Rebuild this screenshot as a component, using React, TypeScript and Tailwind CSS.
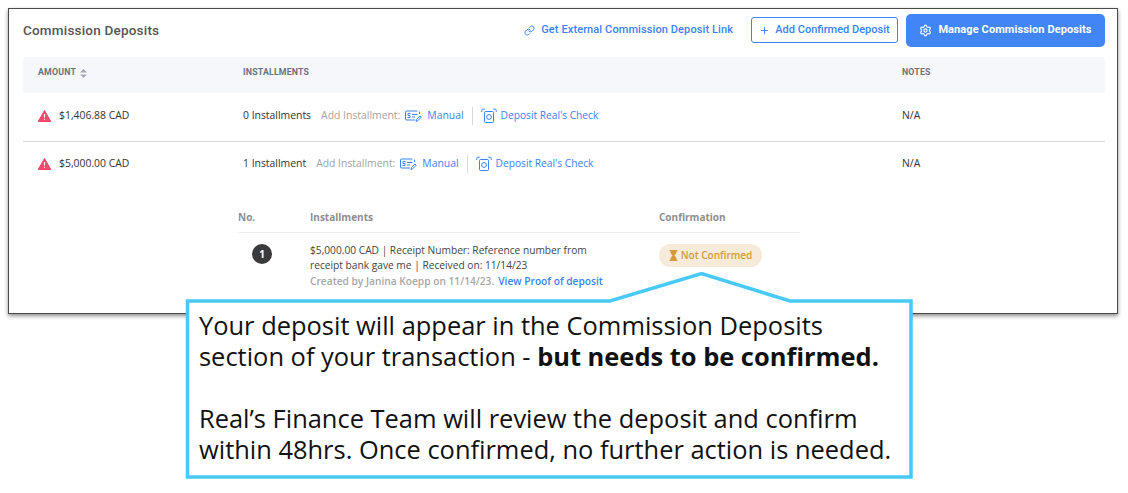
import { Link, Plus, Settings } from "lucide-react";

const din = "font-['Roboto',sans-serif]";
const open = "font-['Open_Sans',sans-serif]";

function ManualIcon() {
  return (
    <svg width="17" height="14" viewBox="0 0 17 14" fill="none" stroke="#3b82f6" strokeWidth="1">
      <path d="M12.5 2H1.5a1 1 0 0 0-1 1v7a1 1 0 0 0 1 1H10" />
      <path d="M14.5 2.5v2.5" />
      <path d="M5.5 4.5H3v2h2v2H2.5" />
      <path d="M7 5.5H12.5M7 8H10" />
      <path d="M11 12.5l.5-2L15 7l1.2 1.2-3.5 3.6z" />
    </svg>
  );
}

function CheckIcon() {
  return (
    <svg width="16" height="16" viewBox="0 0 16 16" fill="none" stroke="#3b82f6" strokeWidth="1">
      <path d="M.8 4V2.2a1 1 0 0 1 1-1h2M15.2 4V2.2a1 1 0 0 0-1-1h-2" />
      <rect x="3.5" y="3.5" width="9" height="11" rx="1" />
      <circle cx="8" cy="9" r="2.4" />
    </svg>
  );
}

function WarningIcon() {
  return (
    <svg width="13" height="12" viewBox="0 0 13 12">
      <path d="M6.5.5L12.8 11.5H.2Z" fill="#f0486c" stroke="#f0486c" strokeLinejoin="round" />
      <path d="M6.5 4v3.6M6.5 8.8v1" stroke="#fff" strokeWidth="1.2" />
    </svg>
  );
}

function SortIcon() {
  return (
    <svg width="7" height="9" viewBox="0 0 7 9" fill="#a3a8b4">
      <path d="M3.5 0L7 3.5H0Z" />
      <path d="M3.5 9L0 5.5H7Z" />
    </svg>
  );
}

function HourglassIcon() {
  return (
    <svg width="9" height="11" viewBox="0 0 9 11" fill="#d59a3c">
      <path d="M.5 0h8v1h-.8c0 2-1 3.400-2.200 4.500 1.200 1.100 2.200 2.500 2.200 4.500h.8v1h-8v-1h.8c0-2 1-3.400 2.200-4.500C2.300 4.400 1.300 3 1.300 1H.5Z" />
    </svg>
  );
}

function AddInstallment() {
  return (
    <div className={`flex items-center text-[10.4px] ${open}`}>
      <span className="text-[#a3a3a3]">Add Installment:</span>
      <span className="ml-[5px] flex items-center gap-[5px] text-[#3b82f6]">
        <ManualIcon />
        Manual
      </span>
      <span className="ml-2 mr-2 h-[18px] w-px bg-[#d9d9d9]" />
      <span className="flex items-center gap-1 text-[10.2px] text-[#3b82f6]">
        <CheckIcon />
        Deposit Real's Check
      </span>
    </div>
  );
}

function DepositRow({ amount, count, border }: { amount: string; count: string; border?: boolean }) {
  return (
    <div className={`flex items-center text-[10.4px] text-[#333] ${open} ${border ? "h-[49px] border-b border-[#d9d9dc] pb-[2px]" : "h-[44px]"}`}>
      <div className="flex w-[220px] items-center pl-[15px]">
        <WarningIcon />
        <span className="ml-2">{amount}</span>
      </div>
      <div className="flex w-[659px] items-center">
        <span className="mr-[10px]">{count}</span>
        <AddInstallment />
      </div>
      <div>N/A</div>
    </div>
  );
}

function Callout() {
  return (
    <div className="absolute left-[185px] top-[271px] h-[208px] w-[729px]">
      <svg className="absolute inset-0" width="729" height="208" fill="none">
        <path
          d="M2.500 30H425L516.500 2.500L605 30H726V206H2.500Z"
          fill="#fff"
          stroke="#48c9f7"
          strokeWidth="3.500"
        />
      </svg>
      <div className={`absolute left-[14px] top-[39px] w-[710px] text-[25.45px] leading-[31px] text-[#111] ${open}`}>
        <p>Your deposit will appear in the Commission Deposits</p>
        <p>
          section of your transaction - <b>but needs to be confirmed.</b>
        </p>
        <p className="mt-[31px]">Real’s Finance Team will review the deposit and confirm</p>
        <p>within 48hrs. Once confirmed, no further action is needed.</p>
      </div>
    </div>
  );
}

export default function App() {
  return (
    <div className="relative h-[493px] w-[1128px] overflow-hidden bg-white">
      <div className="absolute left-2 top-2 h-[306px] w-[1110px] border border-[#4a4a4a] bg-white pl-[14px] pr-[12px] shadow-[0_2px_4px_rgba(0,0,0,0.45)]">
        <div className="flex h-[48px] items-center justify-between pb-[6px]">
          <h1 className={`text-[13.5px] font-medium tracking-[0.2px] text-[#555] ${din}`}>Commission Deposits</h1>
          <div className={`flex items-center text-[11px] font-medium tracking-[0.1px] text-[#3b82f6] ${din}`}>
            <span className="flex items-center gap-[6px] pt-px">
              <Link size={11} />
              Get External Commission Deposit Link
            </span>
            <span className="ml-[18px] flex h-[26px] w-[147px] items-center justify-center gap-[5px] rounded-[3px] border border-[#3b82f6] pt-px tracking-normal">
              <Plus size={11} />
              Add Confirmed Deposit
            </span>
            <span className="ml-2 flex h-[33px] w-[199px] items-center justify-center gap-[6px] rounded-[5px] bg-[#4285f4] pt-px font-bold text-white">
              <Settings size={13} />
              Manage Commission Deposits
            </span>
          </div>
        </div>

        <div className={`flex h-[36px] items-center rounded-[3px] bg-[#f5f7fb] pb-1 text-[8.750px] font-bold tracking-[0.2px] text-[#6b7280] ${din}`}>
          <div className="flex w-[220px] items-center gap-1 pl-[15px]">
            AMOUNT
            <SortIcon />
          </div>
          <div className="w-[659px]">INSTALLMENTS</div>
          <div>NOTES</div>
        </div>

        <DepositRow amount="$1,406.88 CAD" count="0 Installments" border />
        <DepositRow amount="$5,000.00 CAD" count="1 Installment" />

        <div className={`ml-[215px] mt-4 w-[562px] ${open}`}>
          <div className="flex h-[31px] items-center border-b border-[#efefef] text-[10px] font-bold text-[#8f8f8f]">
            <div className="w-[72px]">No.</div>
            <div className="w-[349px]">Installments</div>
            <div>Confirmation</div>
          </div>
          <div className="flex pt-[10px]">
            <div className="w-[72px] pl-[14px] pt-px">
              <span className="flex h-[20px] w-[20px] items-center justify-center rounded-full bg-[#3a3a3a] text-[10px] font-bold text-white">1</span>
            </div>
            <div className="w-[349px] text-[10.200px] leading-[15px] text-[#444]">
              <p className="w-[300px]">$5,000.00 CAD | Receipt Number: Reference number from receipt bank gave me | Received on: 11/14/23</p>
              <p className="pt-px font-semibold text-[#a8a8a8]">
                Created by Janina Koepp on 11/14/23.
                <span className="ml-1 text-[#3b82f6]">View Proof of deposit</span>
              </p>
            </div>
            <div className="mt-px flex h-[23px] w-[103px] items-center justify-center gap-[3px] rounded-full bg-[#f6ead9] text-[10px] font-semibold text-[#d59a3c]">
              <HourglassIcon />
              Not Confirmed
            </div>
          </div>
        </div>
      </div>
      <Callout />
    </div>
  );
}
